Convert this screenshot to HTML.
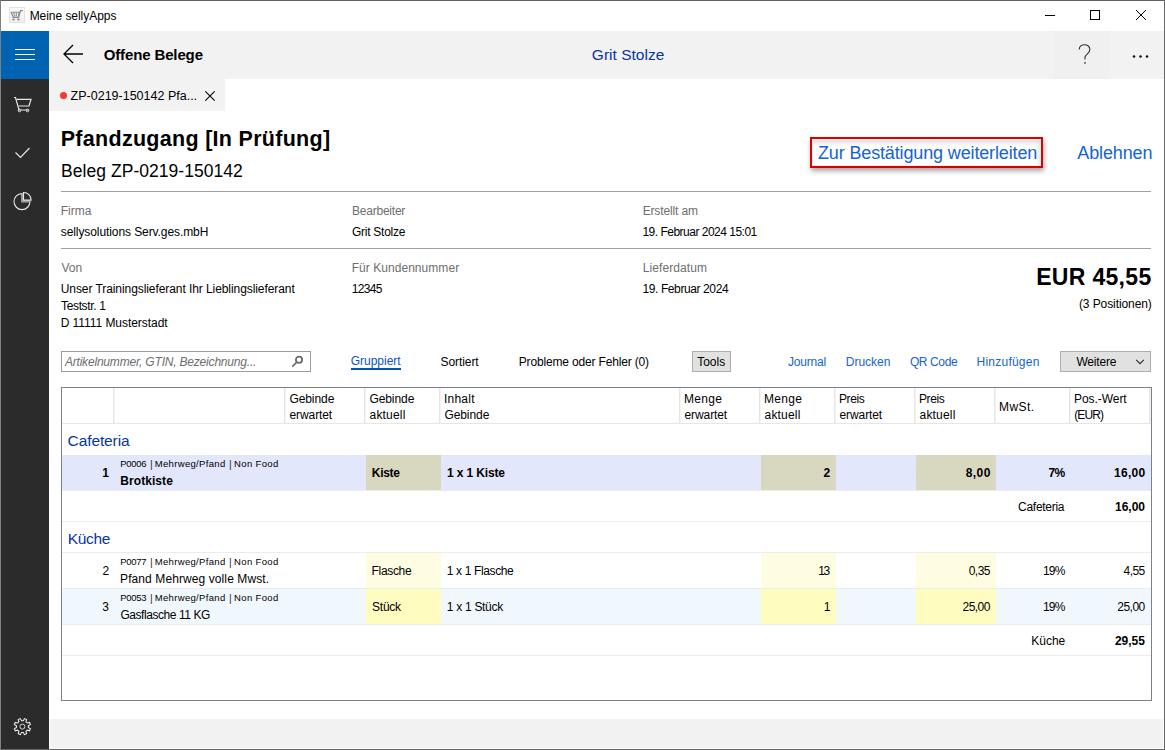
<!DOCTYPE html>
<html><head><meta charset="utf-8"><style>
html,body{margin:0;padding:0;width:1165px;height:750px;overflow:hidden;background:#fff;}
body{position:relative;font-family:"Liberation Sans",sans-serif;}
.b{position:absolute;}
.t{position:absolute;white-space:nowrap;line-height:30px;}
.win{position:absolute;left:0;top:0;width:1165px;height:750px;box-sizing:border-box;border:1px solid #666;border-top-color:#5f5f5f;border-left-color:#808080;pointer-events:none;}
</style></head><body>
<div class="b" style="left:0px;top:0px;width:1165px;height:750px;background:#ffffff;"></div>
<div class="b" style="left:49px;top:31px;width:1115px;height:48px;background:#f2f2f2;"></div>
<div class="b" style="left:1054px;top:31px;width:55px;height:48px;background:#f0f0f0;"></div>
<div class="b" style="left:1px;top:31px;width:48px;height:48px;background:#0063b1;"></div>
<div class="b" style="left:1px;top:79px;width:48px;height:670px;background:#2b2b2b;"></div>
<div class="b" style="left:49px;top:79px;width:176px;height:32px;background:#f2f2f2;"></div>
<div class="b" style="left:50px;top:719px;width:1113px;height:29px;background:#f2f2f2;"></div>
<div class="b" style="left:61px;top:191px;width:1090px;height:1px;background:#a0a0a0;"></div>
<div class="b" style="left:61px;top:248px;width:1090px;height:1px;background:#a0a0a0;"></div>
<div class="b" style="left:61px;top:387px;width:1091px;height:314px;background:#fff;box-sizing:border-box;border:1px solid #7a818c;"></div>
<div class="b" style="left:62px;top:423px;width:1089px;height:1px;background:#e6e6e6;"></div>
<div class="b" style="left:113px;top:388px;width:1px;height:35px;background:#e6e6e6;"></div>
<div class="b" style="left:114px;top:388px;width:1px;height:35px;background:#f3f3f3;"></div>
<div class="b" style="left:284px;top:388px;width:1px;height:35px;background:#e6e6e6;"></div>
<div class="b" style="left:285px;top:388px;width:1px;height:35px;background:#f3f3f3;"></div>
<div class="b" style="left:364px;top:388px;width:1px;height:35px;background:#e6e6e6;"></div>
<div class="b" style="left:365px;top:388px;width:1px;height:35px;background:#f3f3f3;"></div>
<div class="b" style="left:439px;top:388px;width:1px;height:35px;background:#e6e6e6;"></div>
<div class="b" style="left:440px;top:388px;width:1px;height:35px;background:#f3f3f3;"></div>
<div class="b" style="left:679px;top:388px;width:1px;height:35px;background:#e6e6e6;"></div>
<div class="b" style="left:680px;top:388px;width:1px;height:35px;background:#f3f3f3;"></div>
<div class="b" style="left:759px;top:388px;width:1px;height:35px;background:#e6e6e6;"></div>
<div class="b" style="left:760px;top:388px;width:1px;height:35px;background:#f3f3f3;"></div>
<div class="b" style="left:834px;top:388px;width:1px;height:35px;background:#e6e6e6;"></div>
<div class="b" style="left:835px;top:388px;width:1px;height:35px;background:#f3f3f3;"></div>
<div class="b" style="left:914px;top:388px;width:1px;height:35px;background:#e6e6e6;"></div>
<div class="b" style="left:915px;top:388px;width:1px;height:35px;background:#f3f3f3;"></div>
<div class="b" style="left:994px;top:388px;width:1px;height:35px;background:#e6e6e6;"></div>
<div class="b" style="left:995px;top:388px;width:1px;height:35px;background:#f3f3f3;"></div>
<div class="b" style="left:1069px;top:388px;width:1px;height:35px;background:#e6e6e6;"></div>
<div class="b" style="left:1070px;top:388px;width:1px;height:35px;background:#f3f3f3;"></div>
<div class="b" style="left:1149px;top:388px;width:1px;height:35px;background:#e6e6e6;"></div>
<div class="b" style="left:1150px;top:388px;width:1px;height:35px;background:#f3f3f3;"></div>
<div class="b" style="left:62px;top:455px;width:1089px;height:35px;background:#e2e7fb;"></div>
<div class="b" style="left:366px;top:455px;width:75px;height:35px;background:#d8d8c1;"></div>
<div class="b" style="left:761px;top:455px;width:75px;height:35px;background:#d8d8c1;"></div>
<div class="b" style="left:916px;top:455px;width:80px;height:35px;background:#d8d8c1;"></div>
<div class="b" style="left:62px;top:490px;width:1089px;height:1px;background:#ececec;"></div>
<div class="b" style="left:62px;top:521px;width:1089px;height:1px;background:#ececec;"></div>
<div class="b" style="left:62px;top:552px;width:1089px;height:1px;background:#ececec;"></div>
<div class="b" style="left:366px;top:553px;width:75px;height:35px;background:#fffde1;"></div>
<div class="b" style="left:761px;top:553px;width:75px;height:35px;background:#fffde1;"></div>
<div class="b" style="left:916px;top:553px;width:80px;height:35px;background:#fffde1;"></div>
<div class="b" style="left:62px;top:588px;width:1089px;height:1px;background:#ececec;"></div>
<div class="b" style="left:62px;top:589px;width:1089px;height:36px;background:#f1f8fd;"></div>
<div class="b" style="left:366px;top:589px;width:75px;height:36px;background:#fffcc0;"></div>
<div class="b" style="left:761px;top:589px;width:75px;height:36px;background:#fffcc0;"></div>
<div class="b" style="left:916px;top:589px;width:80px;height:36px;background:#fffcc0;"></div>
<div class="b" style="left:62px;top:624px;width:1089px;height:1px;background:#ececec;"></div>
<div class="b" style="left:62px;top:655px;width:1089px;height:1px;background:#ececec;"></div>
<div class="b" style="left:810px;top:137px;width:233px;height:31px;background:transparent;box-sizing:border-box;border:2px solid #da0000;box-shadow:1px 3px 5px rgba(0,0,0,0.35), inset 0 0 0 1px #e3f0f0, inset -2px 4px 4px rgba(0,0,0,0.13);"></div>
<div class="b" style="left:61px;top:351px;width:250px;height:21px;background:#fff;box-sizing:border-box;border:1px solid #9b9ca1;"></div>
<div class="b" style="left:692px;top:351px;width:39px;height:21px;background:#e1e1e1;box-sizing:border-box;border:1px solid #adadad;"></div>
<div class="b" style="left:1060px;top:351px;width:91px;height:21px;background:#e1e1e1;box-sizing:border-box;border:1px solid #adadad;"></div>
<div class="b" style="left:351px;top:368px;width:50px;height:2px;background:#0054b0;"></div>
<div class="b" style="left:60px;top:92px;width:7px;height:7px;background:#f33a2e;border-radius:50%;"></div>
<svg class="b" style="left:9px;top:7px;" width="16" height="16" viewBox="0 0 16 16"><defs><linearGradient id="ag" x1="0" y1="0" x2="0" y2="1"><stop offset="0" stop-color="#fbfbfb"/><stop offset="1" stop-color="#efefef"/></linearGradient></defs><rect x="0.5" y="0.5" width="15" height="15" fill="url(#ag)" stroke="#e2e2e2"/><path d="M2 5 L4.3 10.3 H9.6 L11.6 3.6 H14" fill="none" stroke="#8a8a8a" stroke-width="1.2"/><path d="M4.6 5 L5.6 9.5 M7.3 5 V9.5 M9.9 5 L9.4 9.5 M2.2 5.2 H11" fill="none" stroke="#8f8f8f" stroke-width="1.1"/><ellipse cx="4.6" cy="12.5" rx="1.3" ry="0.9" fill="#8a8a8a"/><ellipse cx="9.4" cy="12.5" rx="1.3" ry="0.9" fill="#8a8a8a"/></svg>
<svg class="b" style="left:1044px;top:10px;" width="12" height="12" viewBox="0 0 12 12"><path d="M1 5.5 H11" stroke="#000" stroke-width="1"/></svg>
<svg class="b" style="left:1089px;top:9px;" width="12" height="12" viewBox="0 0 12 12"><rect x="1.5" y="1.5" width="9" height="9" fill="none" stroke="#000" stroke-width="1"/></svg>
<svg class="b" style="left:1135px;top:9px;" width="12" height="12" viewBox="0 0 12 12"><path d="M1 1 L11 11 M11 1 L1 11" stroke="#000" stroke-width="1"/></svg>
<svg class="b" style="left:15px;top:48px;" width="20" height="12" viewBox="0 0 20 12"><path d="M0 1.5 H20 M0 6.5 H20 M0 11.5 H20" stroke="#fff" stroke-width="1"/></svg>
<svg class="b" style="left:62px;top:44px;" width="22" height="20" viewBox="0 0 22 20"><path d="M11 1 L2 10 L11 19 M2 10 H21" fill="none" stroke="#000" stroke-width="1.3"/></svg>
<svg class="b" style="left:1076px;top:43px;" width="16" height="22" viewBox="0 0 16 22"><path d="M3.2 6.6 C3.2 3.2 5.6 1.7 8.5 1.7 C11.4 1.7 13.9 3.6 13.9 6.6 C13.9 10 10 11 9 14 L9 16.5" fill="none" stroke="#333" stroke-width="1.1"/><circle cx="9" cy="19.8" r="0.9" fill="#333"/></svg>
<svg class="b" style="left:1130px;top:53px;" width="20" height="6" viewBox="0 0 20 6"><circle cx="4" cy="3.4" r="1.25" fill="#111"/><circle cx="10.5" cy="3.4" r="1.25" fill="#111"/><circle cx="17" cy="3.4" r="1.25" fill="#111"/></svg>
<svg class="b" style="left:204px;top:90px;" width="13" height="13" viewBox="0 0 13 13"><path d="M1.3 1.3 L10.7 10.7 M10.7 1.3 L1.3 10.7" stroke="#000" stroke-width="1.1"/></svg>
<svg class="b" style="left:290px;top:355px;" width="14" height="14" viewBox="0 0 14 14"><circle cx="9" cy="4.8" r="3.1" fill="none" stroke="#6a6a6a" stroke-width="1.8"/><path d="M6.9 7.0 L2.3 11.6" stroke="#6a6a6a" stroke-width="1.7"/></svg>
<svg class="b" style="left:1134px;top:357px;" width="12" height="9" viewBox="0 0 12 9"><path d="M2.2 2.8 L6 6.6 L9.8 2.8" fill="none" stroke="#2a2a2a" stroke-width="1.1"/></svg>
<svg class="b" style="left:12px;top:95px;" width="22" height="18" viewBox="0 0 22 18"><path d="M2 2.5 H3.5 L7 15 H17" fill="none" stroke="#e6e6e6" stroke-width="1.2"/><path d="M4.5 4.3 H19 L17 11 H6.5" fill="none" stroke="#e6e6e6" stroke-width="1.2"/><circle cx="7.5" cy="15.5" r="1.3" fill="none" stroke="#e6e6e6"/><circle cx="15.5" cy="15.5" r="1.3" fill="none" stroke="#e6e6e6"/></svg>
<svg class="b" style="left:14px;top:146px;" width="18" height="14" viewBox="0 0 18 14"><path d="M1.5 6.5 L6.5 11.5 L15.5 2" fill="none" stroke="#e6e6e6" stroke-width="1.2"/></svg>
<svg class="b" style="left:12px;top:191px;" width="22" height="22" viewBox="0 0 22 22"><path d="M10 2.6 A8 8 0 1 0 18 10.6 H10 Z" fill="none" stroke="#e8e8e8" stroke-width="1.1"/><path d="M10.2 2.6 V10.4 H18" fill="none" stroke="#9d9d9d" stroke-width="1.6"/><path d="M11.5 1.5 V9.1 H19.1 A7.6 7.6 0 0 0 11.5 1.5 Z" fill="none" stroke="#e8e8e8" stroke-width="1.1"/></svg>
<svg class="b" style="left:11px;top:715px;" width="23" height="23" viewBox="0 0 23 23"><path d="M12.29 5.67 L13.48 3.56 L15.61 4.45 L14.97 6.78 L16.22 8.03 L18.55 7.39 L19.44 9.52 L17.33 10.71 L17.33 12.49 L19.44 13.68 L18.55 15.81 L16.22 15.17 L14.97 16.42 L15.61 18.75 L13.48 19.64 L12.29 17.53 L10.51 17.53 L9.32 19.64 L7.19 18.75 L7.83 16.42 L6.58 15.17 L4.25 15.81 L3.36 13.68 L5.47 12.49 L5.47 10.71 L3.36 9.52 L4.25 7.39 L6.58 8.03 L7.83 6.78 L7.19 4.45 L9.32 3.56 L10.51 5.67 Z" fill="none" stroke="#ececec" stroke-width="1.05"/><circle cx="11.4" cy="11.6" r="2.5" fill="none" stroke="#d0d0d0" stroke-width="1"/></svg>
<div class="t" style="left:29.64px;top:1.00px;font-size:12px;color:#000;letter-spacing:-0.040px;">Meine sellyApps</div>
<div class="t" style="left:103.70px;top:40.00px;font-size:15px;color:#000;font-weight:700;letter-spacing:-0.131px;">Offene Belege</div>
<div class="t" style="left:591.83px;top:40.00px;font-size:15.5px;color:#0836a0;letter-spacing:0.018px;">Grit Stolze</div>
<div class="t" style="left:70.62px;top:81.00px;font-size:12.5px;color:#000;">ZP-0219-150142 Pfa...</div>
<div class="t" style="left:60.71px;top:124.00px;font-size:21.5px;color:#000;font-weight:700;letter-spacing:0.291px;">Pfandzugang [In Prüfung]</div>
<div class="t" style="left:61.10px;top:156.00px;font-size:17.5px;color:#000;letter-spacing:0.039px;">Beleg ZP-0219-150142</div>
<div class="t" style="left:817.96px;top:138.00px;font-size:18px;color:#1464d2;letter-spacing:-0.140px;">Zur Bestätigung weiterleiten</div>
<div class="t" style="left:1077.30px;top:138.00px;font-size:18px;color:#1464d2;letter-spacing:-0.123px;">Ablehnen</div>
<div class="t" style="left:60.74px;top:196.00px;font-size:12px;color:#6e6e6e;">Firma</div>
<div class="t" style="left:352.04px;top:196.00px;font-size:12px;color:#6e6e6e;letter-spacing:-0.228px;">Bearbeiter</div>
<div class="t" style="left:642.64px;top:196.00px;font-size:12px;color:#6e6e6e;letter-spacing:-0.136px;">Erstellt am</div>
<div class="t" style="left:60.76px;top:217.00px;font-size:12px;color:#000;letter-spacing:-0.086px;">sellysolutions Serv.ges.mbH</div>
<div class="t" style="left:352.00px;top:217.00px;font-size:12px;color:#000;letter-spacing:-0.258px;">Grit Stolze</div>
<div class="t" style="left:642.46px;top:217.00px;font-size:12px;color:#000;letter-spacing:-0.506px;">19. Februar 2024 15:01</div>
<div class="t" style="left:61.50px;top:253.00px;font-size:12px;color:#6e6e6e;">Von</div>
<div class="t" style="left:351.64px;top:253.00px;font-size:12px;color:#6e6e6e;letter-spacing:0.053px;">Für Kundennummer</div>
<div class="t" style="left:642.64px;top:253.00px;font-size:12px;color:#6e6e6e;letter-spacing:0.105px;">Lieferdatum</div>
<div class="t" style="left:60.76px;top:274.00px;font-size:12px;color:#000;letter-spacing:-0.075px;">Unser Trainingslieferant Ihr Lieblingslieferant</div>
<div class="t" style="left:61.06px;top:291.00px;font-size:12px;color:#000;letter-spacing:-0.358px;">Teststr. 1</div>
<div class="t" style="left:60.64px;top:308.00px;font-size:12px;color:#000;letter-spacing:-0.044px;">D 11111 Musterstadt</div>
<div class="t" style="left:351.86px;top:274.00px;font-size:12px;color:#000;letter-spacing:-0.724px;">12345</div>
<div class="t" style="left:642.46px;top:274.00px;font-size:12px;color:#000;letter-spacing:-0.394px;">19. Februar 2024</div>
<div class="t" style="left:1036.22px;top:262.00px;font-size:23px;color:#000;font-weight:700;letter-spacing:0.309px;">EUR 45,55</div>
<div class="t" style="left:1078.98px;top:289.00px;font-size:12px;color:#000;letter-spacing:-0.091px;">(3 Positionen)</div>
<div class="t" style="left:64.90px;top:347.00px;font-size:12px;color:#6d6d6d;font-style:italic;letter-spacing:-0.193px;">Artikelnummer, GTIN, Bezeichnung...</div>
<div class="t" style="left:350.70px;top:346.00px;font-size:12px;color:#0a55b8;letter-spacing:-0.006px;">Gruppiert</div>
<div class="t" style="left:440.52px;top:347.00px;font-size:12px;color:#000;letter-spacing:-0.075px;">Sortiert</div>
<div class="t" style="left:518.74px;top:347.00px;font-size:12px;color:#000;letter-spacing:-0.164px;">Probleme oder Fehler (0)</div>
<div class="t" style="left:697.16px;top:347.00px;font-size:12px;color:#000;">Tools</div>
<div class="t" style="left:787.88px;top:347.00px;font-size:12px;color:#1464d2;letter-spacing:-0.182px;">Journal</div>
<div class="t" style="left:845.74px;top:347.00px;font-size:12px;color:#1464d2;letter-spacing:0.008px;">Drucken</div>
<div class="t" style="left:909.92px;top:347.00px;font-size:12px;color:#1464d2;letter-spacing:-0.385px;">QR Code</div>
<div class="t" style="left:976.54px;top:347.00px;font-size:12px;color:#1464d2;letter-spacing:0.236px;">Hinzufügen</div>
<div class="t" style="left:1076.40px;top:347.00px;font-size:12px;color:#000;letter-spacing:-0.182px;">Weitere</div>
<div class="t" style="left:289.40px;top:384.00px;font-size:12px;color:#000;letter-spacing:-0.073px;">Gebinde</div>
<div class="t" style="left:289.52px;top:400.00px;font-size:12px;color:#000;letter-spacing:-0.099px;">erwartet</div>
<div class="t" style="left:369.40px;top:384.00px;font-size:12px;color:#000;letter-spacing:-0.073px;">Gebinde</div>
<div class="t" style="left:369.52px;top:400.00px;font-size:12px;color:#000;letter-spacing:0.190px;">aktuell</div>
<div class="t" style="left:443.92px;top:384.00px;font-size:12px;color:#000;letter-spacing:0.240px;">Inhalt</div>
<div class="t" style="left:444.40px;top:400.00px;font-size:12px;color:#000;letter-spacing:-0.073px;">Gebinde</div>
<div class="t" style="left:684.04px;top:384.00px;font-size:12px;color:#000;letter-spacing:0.301px;">Menge</div>
<div class="t" style="left:684.52px;top:400.00px;font-size:12px;color:#000;letter-spacing:-0.099px;">erwartet</div>
<div class="t" style="left:764.04px;top:384.00px;font-size:12px;color:#000;letter-spacing:0.301px;">Menge</div>
<div class="t" style="left:764.52px;top:400.00px;font-size:12px;color:#000;letter-spacing:0.190px;">aktuell</div>
<div class="t" style="left:839.04px;top:384.00px;font-size:12px;color:#000;letter-spacing:-0.430px;">Preis</div>
<div class="t" style="left:839.52px;top:400.00px;font-size:12px;color:#000;letter-spacing:-0.099px;">erwartet</div>
<div class="t" style="left:919.04px;top:384.00px;font-size:12px;color:#000;letter-spacing:-0.430px;">Preis</div>
<div class="t" style="left:919.52px;top:400.00px;font-size:12px;color:#000;letter-spacing:0.190px;">aktuell</div>
<div class="t" style="left:1074.04px;top:384.00px;font-size:12px;color:#000;letter-spacing:-0.061px;">Pos.-Wert</div>
<div class="t" style="left:1074.28px;top:400.00px;font-size:12px;color:#000;letter-spacing:-0.893px;">(EUR)</div>
<div class="t" style="left:999.04px;top:392.00px;font-size:12px;color:#000;letter-spacing:0.420px;">MwSt.</div>
<div class="t" style="left:67.62px;top:426.00px;font-size:15.5px;color:#0836a0;letter-spacing:-0.110px;">Cafeteria</div>
<div class="t" style="left:67.66px;top:524.00px;font-size:15.5px;color:#0836a0;letter-spacing:-0.287px;">Küche</div>
<div class="t" style="left:102.14px;top:458.00px;font-size:12px;color:#000;font-weight:700;">1</div>
<div class="t" style="left:120.34px;top:449.00px;font-size:9.5px;color:#000;letter-spacing:-0.317px;">P0006</div>
<div class="t" style="left:149.96px;top:449.00px;font-size:10.5px;color:#333;">|</div>
<div class="t" style="left:154.74px;top:449.00px;font-size:9.5px;color:#000;letter-spacing:0.330px;">Mehrweg/Pfand</div>
<div class="t" style="left:228.96px;top:449.00px;font-size:10.5px;color:#333;">|</div>
<div class="t" style="left:234.04px;top:449.00px;font-size:9.5px;color:#000;letter-spacing:0.353px;">Non Food</div>
<div class="t" style="left:120.28px;top:466.00px;font-size:12px;color:#000;font-weight:700;letter-spacing:0.065px;">Brotkiste</div>
<div class="t" style="left:371.78px;top:458.00px;font-size:12px;color:#000;font-weight:700;letter-spacing:-0.277px;">Kiste</div>
<div class="t" style="left:446.98px;top:458.00px;font-size:12px;color:#000;font-weight:700;letter-spacing:-0.133px;">1 x 1 Kiste</div>
<div class="t" style="left:823.56px;top:458.00px;font-size:12px;color:#000;font-weight:700;">2</div>
<div class="t" style="left:965.64px;top:458.00px;font-size:12px;color:#000;font-weight:700;letter-spacing:0.479px;">8,00</div>
<div class="t" style="left:1048.52px;top:458.00px;font-size:12px;color:#000;font-weight:700;letter-spacing:-0.634px;">7%</div>
<div class="t" style="left:1113.88px;top:458.00px;font-size:12px;color:#000;font-weight:700;letter-spacing:0.331px;">16,00</div>
<div class="t" style="left:102.38px;top:556.00px;font-size:12px;color:#000;">2</div>
<div class="t" style="left:120.34px;top:547.00px;font-size:9.5px;color:#000;letter-spacing:-0.293px;">P0077</div>
<div class="t" style="left:149.96px;top:547.00px;font-size:10.5px;color:#333;">|</div>
<div class="t" style="left:154.74px;top:547.00px;font-size:9.5px;color:#000;letter-spacing:0.330px;">Mehrweg/Pfand</div>
<div class="t" style="left:228.96px;top:547.00px;font-size:10.5px;color:#333;">|</div>
<div class="t" style="left:234.04px;top:547.00px;font-size:9.5px;color:#000;letter-spacing:0.353px;">Non Food</div>
<div class="t" style="left:120.04px;top:564.00px;font-size:12px;color:#000;letter-spacing:0.095px;">Pfand Mehrweg volle Mwst.</div>
<div class="t" style="left:371.54px;top:556.00px;font-size:12px;color:#000;letter-spacing:-0.321px;">Flasche</div>
<div class="t" style="left:446.86px;top:556.00px;font-size:12px;color:#000;letter-spacing:-0.374px;">1 x 1 Flasche</div>
<div class="t" style="left:818.16px;top:556.00px;font-size:12px;color:#000;letter-spacing:-1.274px;">13</div>
<div class="t" style="left:968.74px;top:556.00px;font-size:12px;color:#000;letter-spacing:-0.554px;">0,35</div>
<div class="t" style="left:1042.96px;top:556.00px;font-size:12px;color:#000;letter-spacing:-0.814px;">19%</div>
<div class="t" style="left:1123.56px;top:556.00px;font-size:12px;color:#000;letter-spacing:-0.561px;">4,55</div>
<div class="t" style="left:102.26px;top:592.00px;font-size:12px;color:#000;">3</div>
<div class="t" style="left:120.34px;top:583.00px;font-size:9.5px;color:#000;letter-spacing:-0.317px;">P0053</div>
<div class="t" style="left:149.96px;top:583.00px;font-size:10.5px;color:#333;">|</div>
<div class="t" style="left:154.74px;top:583.00px;font-size:9.5px;color:#000;letter-spacing:0.330px;">Mehrweg/Pfand</div>
<div class="t" style="left:228.96px;top:583.00px;font-size:10.5px;color:#333;">|</div>
<div class="t" style="left:234.04px;top:583.00px;font-size:9.5px;color:#000;letter-spacing:0.353px;">Non Food</div>
<div class="t" style="left:120.40px;top:600.00px;font-size:12px;color:#000;letter-spacing:-0.432px;">Gasflasche 11 KG</div>
<div class="t" style="left:372.02px;top:592.00px;font-size:12px;color:#000;letter-spacing:-0.238px;">Stück</div>
<div class="t" style="left:446.86px;top:592.00px;font-size:12px;color:#000;letter-spacing:-0.304px;">1 x 1 Stück</div>
<div class="t" style="left:823.68px;top:592.00px;font-size:12px;color:#000;">1</div>
<div class="t" style="left:962.50px;top:592.00px;font-size:12px;color:#000;letter-spacing:-0.524px;">25,00</div>
<div class="t" style="left:1042.96px;top:592.00px;font-size:12px;color:#000;letter-spacing:-0.814px;">19%</div>
<div class="t" style="left:1117.30px;top:592.00px;font-size:12px;color:#000;letter-spacing:-0.524px;">25,00</div>
<div class="t" style="left:1018.10px;top:492.00px;font-size:12px;color:#000;letter-spacing:-0.292px;">Cafeteria</div>
<div class="t" style="left:1115.00px;top:492.00px;font-size:12px;color:#000;font-weight:700;">16,00</div>
<div class="t" style="left:1031.34px;top:626.00px;font-size:12px;color:#000;letter-spacing:-0.033px;">Küche</div>
<div class="t" style="left:1114.88px;top:626.00px;font-size:12px;color:#000;font-weight:700;">29,55</div>
<div class="win"></div>
</body></html>
